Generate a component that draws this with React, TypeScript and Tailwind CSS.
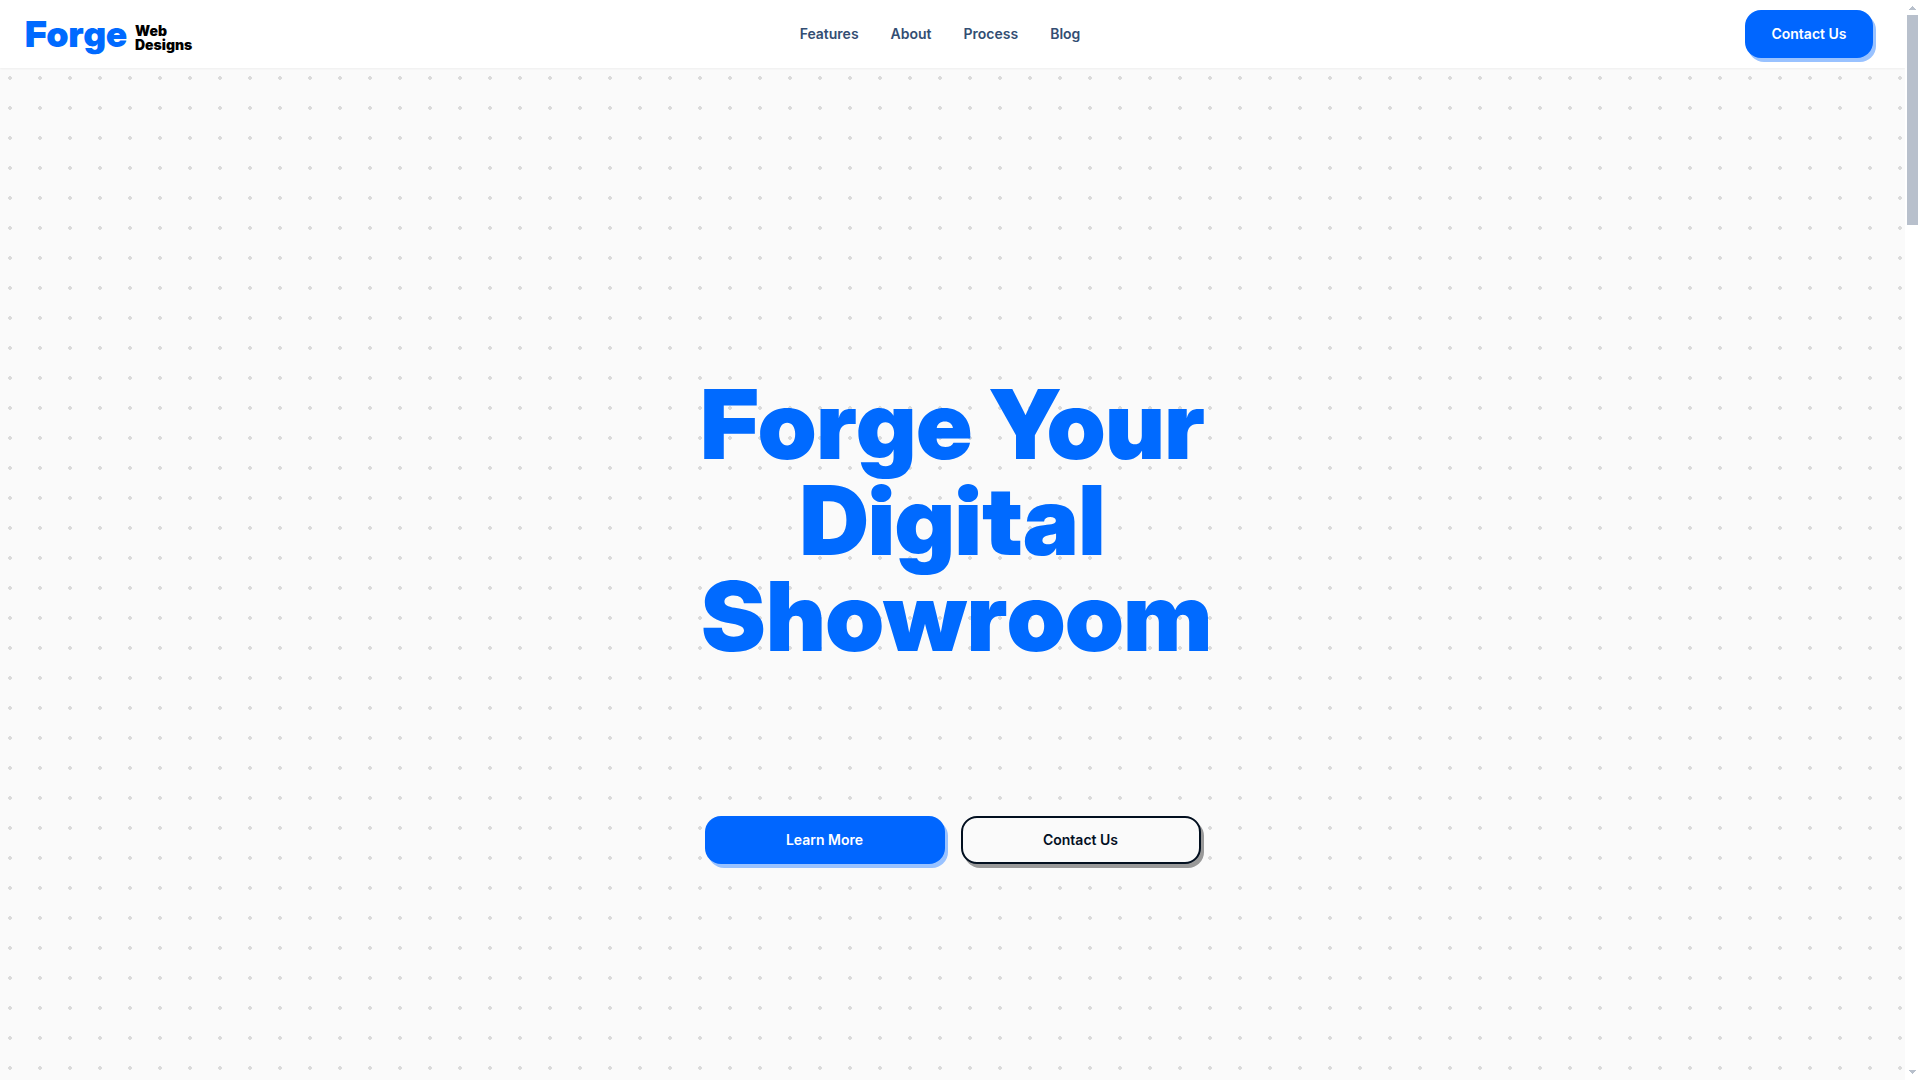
const links = ["Features", "About", "Process", "Blog"];

function Scrollbar() {
  return (
    <div aria-hidden="true" className="flex w-[15px] shrink-0 flex-col items-center justify-between bg-white pt-[6px] pb-[6px]">
      <div className="flex w-full flex-col items-center gap-[5px]">
        <svg className="h-1 w-[7px]" viewBox="0 0 7 4" fill="#b8c0cc" shapeRendering="crispEdges">
          <path d="M3 0h1v1h1v1h1v1h1v1H0V3h1V2h1V1h1z" />
        </svg>
        <div className="h-[210px] w-[11px] bg-[#b8c0cc]" />
      </div>
      <svg className="h-1 w-[7px]" viewBox="0 0 7 4" fill="#b8c0cc" shapeRendering="crispEdges">
        <path d="M0 0h7v1H6v1H5v1H4v1H3V3H2V2H1V1H0z" />
      </svg>
    </div>
  );
}

export default function App() {
  return (
    <div className="flex min-h-screen bg-white font-['Inter',sans-serif]">
      <div className="flex flex-1 flex-col bg-[#fafafa] bg-[radial-gradient(circle,#dbdbdb_2px,transparent_2px)] bg-[length:30px_30px] bg-[position:-5px_3px]">
        <header className="grid h-[68px] grid-cols-3 items-center bg-white pr-8 pl-[25px] shadow-xs">
          <a href="#top" className="flex items-center gap-2 justify-self-start">
            <span className="font-['Inter_Display','Inter',sans-serif] text-4xl font-black text-[#006aff]">Forge</span>
            <span className="pt-2 text-sm leading-[14px] font-black text-black">
              Web
              <br />
              Designs
            </span>
          </a>
          <nav className="flex justify-center gap-8 pr-[18px] text-sm font-semibold text-[#334e73]">
            {links.map((l) => (
              <a key={l} href={`#${l.toLowerCase()}`}>{l}</a>
            ))}
          </nav>
          <button className="h-12 w-32 justify-self-end rounded-2xl bg-[#0066ff] text-sm font-semibold text-white shadow-[3px_4px_0_#99c2ff]">
            Contact Us
          </button>
        </header>
        <main id="top" className="flex flex-1 flex-col items-center justify-center pt-23">
          <h1 className="w-[504px] text-center font-['Inter_Display','Inter',sans-serif] text-8xl leading-none font-black whitespace-nowrap text-[#006aff]">
            Forge Your
            <br />
            Digital
            <br />
            Showroom
          </h1>
          <div className="mt-38 flex gap-4">
            <button className="h-12 w-60 rounded-2xl bg-[#0066ff] text-sm font-semibold text-white shadow-[3px_4px_0_#99c2ff]">
              Learn More
            </button>
            <button className="h-12 w-60 rounded-2xl border-2 border-[#020f1f] bg-[#fafafa] text-sm font-semibold text-[#020f1f] shadow-[3px_4px_0_#999999]">
              Contact Us
            </button>
          </div>
        </main>
      </div>
      <Scrollbar />
    </div>
  );
}
